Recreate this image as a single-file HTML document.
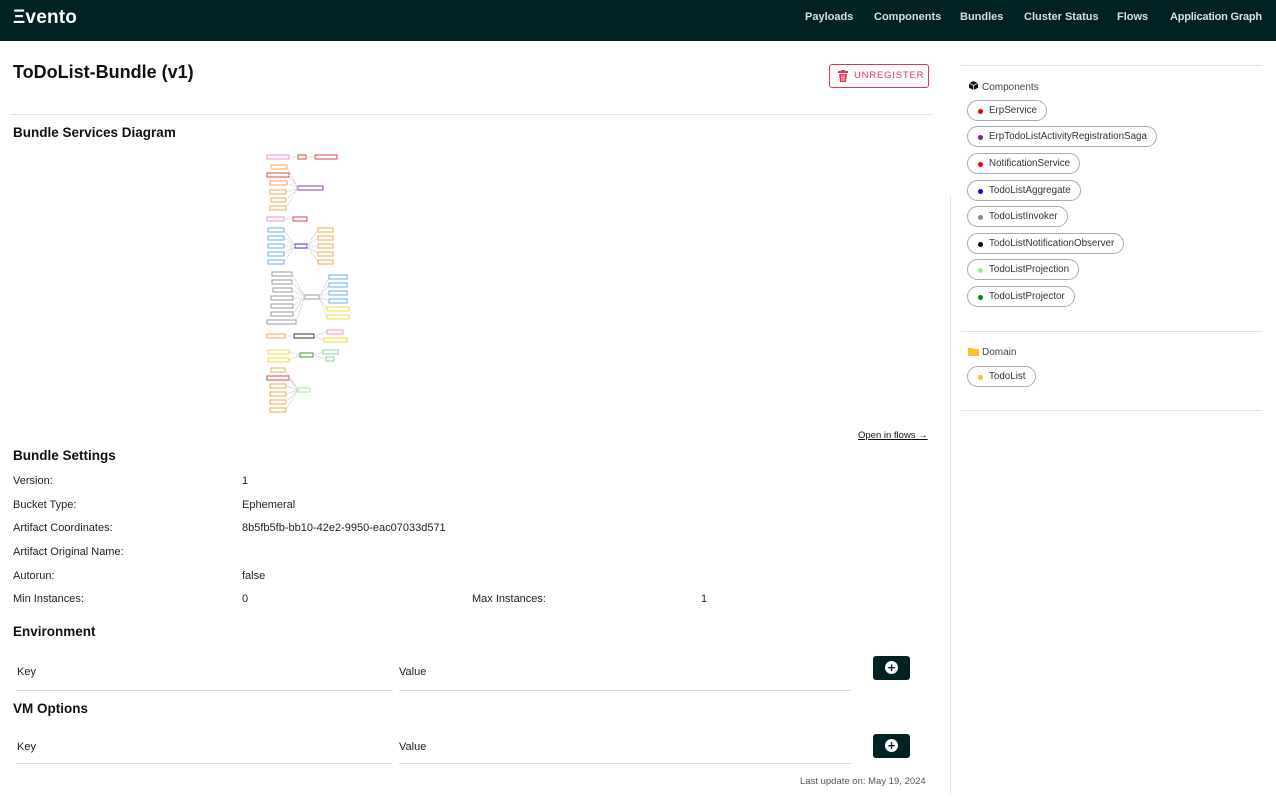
<!DOCTYPE html>
<html><head><meta charset="utf-8"><style>
*{margin:0;padding:0;box-sizing:border-box}
body{width:1276px;height:807px;overflow:hidden;background:#fff;font-family:"Liberation Sans",sans-serif;color:#111;position:relative}
.a{position:absolute;white-space:nowrap}
.hdr{position:absolute;left:0;top:0;width:1276px;height:41px;background:#012122}
.nav{top:11px;color:#d8dede;font-size:11px;font-weight:bold}
h1{font-size:18px;font-weight:bold}
.h2{font-size:13.5px;font-weight:bold}
.lbl{font-size:11px;color:#222}
.hr{position:absolute;height:1px;background:#e2e2e2}
.chip{position:absolute;left:967px;height:21px;border:1px solid #aaa;border-radius:11px;font-size:9.8px;color:#333;padding:0 9px 0 21px;line-height:20px}
.chip i{position:absolute;left:10px;top:8px;width:5px;height:5px;border-radius:50%}
.btn{position:absolute;left:873px;width:37px;height:24px;background:#012122;border-radius:3px}
.btn:after{content:"+";position:absolute;left:12px;top:5px;width:13px;height:13px;border-radius:50%;background:#fff;color:#012122;font-size:13px;font-weight:bold;line-height:13px;text-align:center}
</style></head><body>
<div class="hdr"></div>
<div class="a" style="left:13px;top:7px;color:#fff;font-size:19px;font-weight:bold;letter-spacing:0.2px">Ξvento</div>
<div class="a nav" style="left:805px">Payloads</div>
<div class="a nav" style="left:874px">Components</div>
<div class="a nav" style="left:960px">Bundles</div>
<div class="a nav" style="left:1024px">Cluster Status</div>
<div class="a nav" style="left:1117px">Flows</div>
<div class="a nav" style="left:1170px;letter-spacing:-0.2px">Application Graph</div>

<h1 class="a" style="left:13px;top:62px">ToDoList-Bundle (v1)</h1>
<div class="a" style="left:829px;top:64px;width:100px;height:24px;border:1px solid #e0384f;border-radius:3px;color:#e0384f;font-size:9.5px;letter-spacing:0.8px;line-height:22px;padding-left:24px">UNREGISTER
<svg style="position:absolute;left:8px;top:5px" width="10" height="12" viewBox="0 0 10 12"><rect x="0" y="1" width="10" height="2" fill="#e0384f"/><rect x="3" y="0" width="4" height="2" fill="#e0384f"/><path d="M1 4h8l-1 8H2z" fill="#e0384f"/><path d="M4 5v6M6 5v6" stroke="#fff" stroke-width="0.8"/></svg></div>
<div class="hr" style="left:10px;top:114px;width:923px"></div>
<div class="a h2" style="left:13px;top:125px">Bundle Services Diagram</div>

<svg class="a" style="left:0;top:0" width="400" height="420" fill="none" stroke-width="1">
<g stroke="#f48fc8"><rect x="267" y="155" width="22" height="4"/><rect x="267" y="217" width="17" height="4"/><rect x="327" y="330" width="16" height="4"/></g>
<g stroke="#d94545"><rect x="298" y="155" width="8" height="4"/><rect x="315" y="155" width="22" height="4"/><rect x="267" y="173" width="22" height="4"/><rect x="293" y="217" width="14" height="4"/><rect x="267" y="376" width="22" height="4"/></g>
<g stroke="#f5a950"><rect x="271" y="165" width="16" height="4"/><rect x="270" y="181" width="17" height="4"/><rect x="270" y="190" width="16" height="4"/><rect x="271" y="198" width="15" height="4"/><rect x="270" y="206" width="16" height="4"/>
<rect x="318" y="228" width="15" height="4"/><rect x="318" y="236" width="15" height="4"/><rect x="318" y="244" width="15" height="4"/><rect x="318" y="252" width="15" height="4"/><rect x="318" y="260" width="15" height="4"/>
<rect x="267" y="334" width="18" height="4"/><rect x="271" y="368" width="14" height="4"/><rect x="270" y="384" width="16" height="4"/><rect x="270" y="392" width="16" height="4"/><rect x="270" y="400" width="16" height="4"/><rect x="270" y="408" width="16" height="4"/></g>
<rect x="298" y="186" width="25" height="4" stroke="#8e3fa0"/>
<g stroke="#6aa8f0"><rect x="268" y="228" width="16" height="4"/><rect x="268" y="236" width="16" height="4"/><rect x="268" y="244" width="16" height="4"/><rect x="268" y="252" width="16" height="4"/><rect x="268" y="260" width="16" height="4"/>
<rect x="329" y="275" width="18" height="4"/><rect x="329" y="283" width="18" height="4"/><rect x="329" y="291" width="18" height="4"/><rect x="329" y="299" width="18" height="4"/></g>
<rect x="295" y="244" width="12" height="4" stroke="#3030e0"/>
<g stroke="#999"><rect x="272" y="272" width="20" height="4"/><rect x="272" y="280" width="20" height="4"/><rect x="273" y="288" width="19" height="4"/><rect x="271" y="296" width="22" height="4"/><rect x="271" y="304" width="22" height="4"/><rect x="271" y="312" width="22" height="4"/><rect x="267" y="320" width="29" height="4"/><rect x="305" y="295" width="14" height="4"/></g>
<g stroke="#f5d840"><rect x="327" y="307" width="22" height="4"/><rect x="327" y="315" width="22" height="4"/><rect x="324" y="338" width="23" height="4"/><rect x="268" y="350" width="21" height="4"/><rect x="268" y="358" width="21" height="4"/></g>
<rect x="294" y="334" width="20" height="4" stroke="#333"/>
<rect x="300" y="353" width="13" height="4" stroke="#3a9a3a"/>
<g stroke="#8fd0a0"><rect x="323" y="350" width="15" height="4"/><rect x="326" y="357" width="8" height="4"/></g>
<rect x="298" y="388" width="12" height="4" stroke="#aee89a"/>
<g stroke="#ccc" stroke-dasharray="1.5 1"><path d="M289 157h9M306 157h9M287 167l11 21M289 175l9 13M287 183l11 5M286 192l12-4M286 200l12-12M286 208l12-20M284 219h9M284 230l11 16M284 238l11 8M284 246h11M284 254l11-8M284 262l11-16M307 246l11-16M307 246l11-8M307 246h11M307 246l11 8M307 246l11 16M292 274l13 23M292 282l13 15M292 290l13 7M293 298h12M293 306l12-9M293 314l12-17M296 322l9-25M319 297l10-20M319 297l10-12M319 297l10-4M319 297l10 4M319 297l8 12M319 297l8 20M285 336h9M314 336l13-4M314 336l10 4M289 352l11 3M289 360l11-5M313 355l10-3M313 355l13 4M285 370l13 20M289 378l9 12M286 386l12 4M286 394l12-4M286 402l12-12M286 410l12-20"/></g>
</svg>

<div class="a" style="left:858px;top:430px;font-size:9.5px;text-decoration:underline;color:#111">Open in flows →</div>
<div class="a h2" style="left:13px;top:448px">Bundle Settings</div>
<div class="a lbl" style="left:13px;top:475px">Version:</div><div class="a lbl" style="left:242px;top:475px">1</div>
<div class="a lbl" style="left:13px;top:499px">Bucket Type:</div><div class="a lbl" style="left:242px;top:499px">Ephemeral</div>
<div class="a lbl" style="left:13px;top:522px">Artifact Coordinates:</div><div class="a lbl" style="left:242px;top:522px">8b5fb5fb-bb10-42e2-9950-eac07033d571</div>
<div class="a lbl" style="left:13px;top:546px">Artifact Original Name:</div>
<div class="a lbl" style="left:13px;top:570px">Autorun:</div><div class="a lbl" style="left:242px;top:570px">false</div>
<div class="a lbl" style="left:13px;top:593px">Min Instances:</div><div class="a lbl" style="left:242px;top:593px">0</div>
<div class="a lbl" style="left:472px;top:593px">Max Instances:</div><div class="a lbl" style="left:701px;top:593px">1</div>

<div class="a h2" style="left:13px;top:624px">Environment</div>
<div class="a lbl" style="left:17px;top:666px">Key</div><div class="a lbl" style="left:399px;top:666px">Value</div>
<div class="hr" style="left:16px;top:690px;width:376px;background:#ddd"></div><div class="hr" style="left:399px;top:690px;width:452px;background:#ddd"></div>
<div class="btn" style="top:656px"></div>
<div class="a h2" style="left:13px;top:701px">VM Options</div>
<div class="a lbl" style="left:17px;top:741px">Key</div><div class="a lbl" style="left:399px;top:741px">Value</div>
<div class="hr" style="left:16px;top:763px;width:376px;background:#ddd"></div><div class="hr" style="left:399px;top:763px;width:452px;background:#ddd"></div>
<div class="btn" style="top:734px"></div>
<div class="a" style="left:800px;top:776px;font-size:9.5px;color:#555">Last update on: May 19, 2024</div>

<div style="position:absolute;left:950px;top:195px;width:1px;height:600px;background:#e6e6e6"></div>
<div class="hr" style="left:961px;top:65px;width:301px"></div>
<svg class="a" style="left:969px;top:81px" width="9" height="9" viewBox="0 0 10 10"><path d="M5 0L10 2.5V7.5L5 10L0 7.5V2.5Z" fill="#111"/><path d="M0 2.5L5 5L10 2.5M5 5V10" stroke="#fff" stroke-width="0.8" fill="none"/></svg>
<div class="a" style="left:982px;top:82px;font-size:10px;color:#444">Components</div>
<div class="chip" style="top:100px"><i style="background:#e00"></i>ErpService</div>
<div class="chip" style="top:126px"><i style="background:#7a1f8a"></i>ErpTodoListActivityRegistrationSaga</div>
<div class="chip" style="top:153px"><i style="background:#e00"></i>NotificationService</div>
<div class="chip" style="top:180px"><i style="background:#00d"></i>TodoListAggregate</div>
<div class="chip" style="top:206px"><i style="background:#888"></i>TodoListInvoker</div>
<div class="chip" style="top:233px"><i style="background:#000"></i>TodoListNotificationObserver</div>
<div class="chip" style="top:259px"><i style="background:#90ee90"></i>TodoListProjection</div>
<div class="chip" style="top:286px"><i style="background:#080"></i>TodoListProjector</div>
<div class="hr" style="left:961px;top:331px;width:301px"></div>
<svg class="a" style="left:968px;top:347px" width="11" height="9" viewBox="0 0 11 9"><path d="M0 1h4l1 1h6v7H0z" fill="#fbc02d"/></svg>
<div class="a" style="left:982px;top:347px;font-size:10px;color:#444">Domain</div>
<div class="chip" style="top:366px"><i style="background:#fbc02d"></i>TodoList</div>
<div class="hr" style="left:961px;top:410px;width:301px"></div>
</body></html>
